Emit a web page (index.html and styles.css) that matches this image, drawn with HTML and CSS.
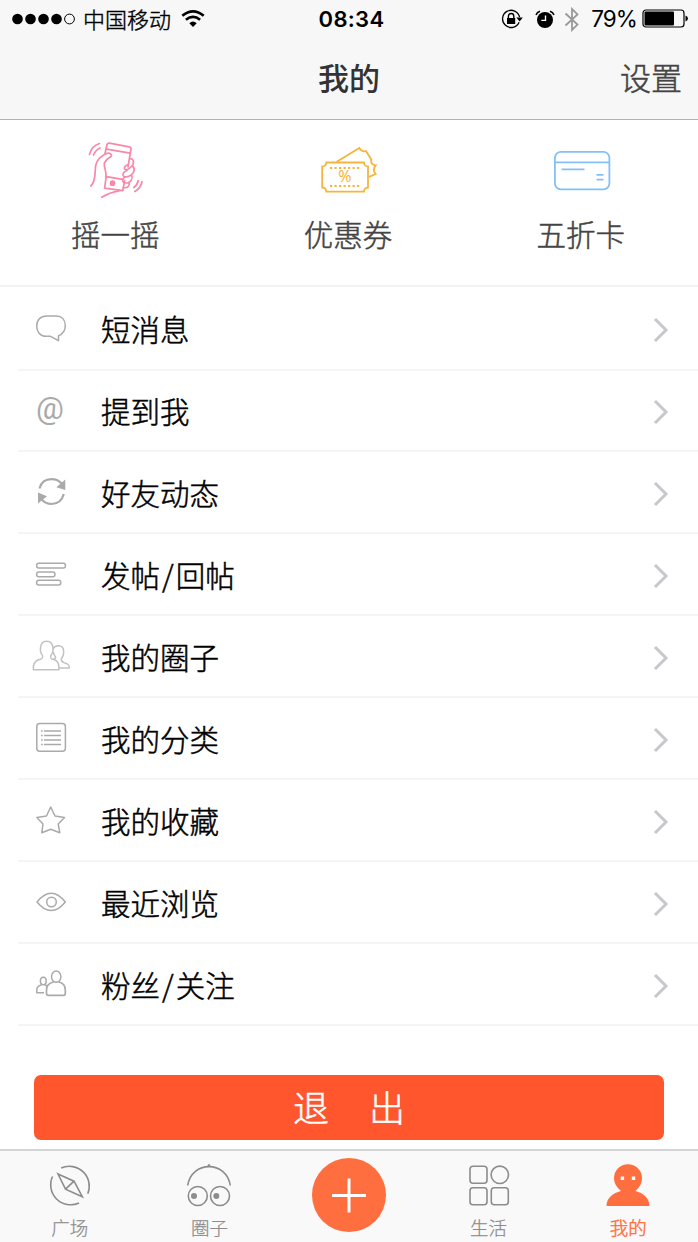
FILE: index.html
```html
<!DOCTYPE html>
<html lang="zh-CN">
<head>
<meta charset="utf-8">
<title>我的</title>
<link rel="stylesheet" href="styles.css">
</head>
<body>
<svg class="defs" width="0" height="0">
  <symbol id="chevron" viewBox="0 0 16 26"><path d="M2 2 L13 13 L2 24" fill="none" stroke="#c7c7cc" stroke-width="3"/></symbol>
</svg>
<div class="app">
  <header class="header">
    <div class="status">
      <div class="status-left">
        <svg width="64" height="12" viewBox="0 0 64 12"><g fill="#000"><circle cx="5.5" cy="6" r="5.3"/><circle cx="18.5" cy="6" r="5.3"/><circle cx="31.5" cy="6" r="5.3"/><circle cx="44.5" cy="6" r="5.3"/></g><circle cx="57.5" cy="6" r="4.9" fill="none" stroke="#000" stroke-width="1"/></svg>
        <span class="carrier">中国移动</span>
        <svg class="wifi" width="24" height="18" viewBox="0 0 24 18"><path d="M1.3 5.8 Q12 -2.9 22.7 5.8" fill="none" stroke="#000" stroke-width="2.7"/><path d="M4.9 9.7 Q12 4.1 19.1 9.7" fill="none" stroke="#000" stroke-width="2.7"/><path d="M8.3 13.2 Q12 10 15.7 13.2 L12 17Z"/></svg>
      </div>
      <span class="time">08:34</span>
      <div class="status-right">
        <svg width="22" height="20" viewBox="0 0 22 20"><path d="M18.1 13.2 A8.6 8.6 0 1 1 18.6 8.2" fill="none" stroke="#000" stroke-width="1.3"/><path d="M15.3 8.4 H21.8 L18.6 12.5Z"/><rect x="6" y="9" width="8.2" height="6"/><path d="M7.4 9.5 V7.2 a2.7 2.7 0 0 1 5.4 0 V9.5" fill="none" stroke="#000" stroke-width="1.4"/></svg>
        <svg class="alarm" width="20" height="19" viewBox="0 0 20 19"><circle cx="10" cy="10" r="8"/><path d="M1 5 Q2 2.2 5 1.2 M19 5 Q18 2.2 15 1.2" fill="none" stroke="#000" stroke-width="1.5"/><path d="M10.5 5.4 V10.4 H6.3" fill="none" stroke="#fff" stroke-width="1.4"/></svg>
        <svg class="bt" width="16" height="25" viewBox="0 0 16 25"><path d="M1.5 6.5 L13.5 17.6 L8 23 V2 L13.5 7.4 L1.5 18.5" fill="none" stroke="#999" stroke-width="1.8"/></svg>
        <span class="percent">79%</span>
        <svg class="battery" width="47" height="20" viewBox="0 0 47 20"><rect x="1" y="1" width="41" height="17" rx="3" fill="none" stroke="#000" stroke-width="1.2"/><rect x="2.5" y="2.5" width="29.5" height="14" rx="1"/><path d="M43.5 6.5 Q46 7.5 46 9.5 Q46 11.5 43.5 12.5Z"/></svg>
      </div>
    </div>
    <div class="nav"><span></span><h1 class="title">我的</h1><a class="settings">设置</a></div>
  </header>

  <section class="actions">
    <a class="action">
      <svg width="60" height="64" viewBox="0 0 60 64" fill="none" stroke="#f888aa" stroke-width="1.7" stroke-linecap="round" stroke-linejoin="round">
        <path d="M4.8 53 C10.5 48 8.5 38 9.8 32 C11 27 16 22.5 20.5 20.5 C24 19.5 26.5 21.5 25 23.5 C22 25 20 26.5 18.2 30.5 C18 35 20.5 38 20 43.5"/>
        <path d="M19 20.5 L21 11.5 Q21.5 10 23.5 10.2 L43.3 13.8 Q45.3 14.3 45 16 L42 34"/>
        <path d="M20.6 16.2 L44.2 20.2"/>
        <path d="M20.4 43.7 L36.4 46.3 M20.2 43.7 L18.6 55.2 L37 57.7 M38.6 47.5 L36.8 57.7"/>
        <path d="M44 25.5 C48 26 48.5 29.5 46 33 C43 36 40 37.5 38.5 36 C38 33.5 40.5 32.2 42 31.8 M46.5 33 C50 36 47.5 41 44.5 42.5 C41 44.5 37.5 44 37 42.5 C36.5 39.5 38.5 38.5 41 37.5 M45.5 42 C47.5 45.5 44.5 49 42 49.8 C38.5 50.5 36.5 49.5 36.7 47 C37 45.5 38 44.5 39 44 M43.5 49.5 C43.5 53.5 41 55.5 37.5 54.5"/>
        <path d="M33.7 57.7 C27 59 22 60.5 15.7 64.3"/>
        <circle cx="26.5" cy="50.2" r="2" fill="#f888aa"/>
        <path d="M3.5 21.5 Q5.5 13 13.5 10.5 M7.5 22 Q9.5 17 14 15 M47.8 54.5 Q51.5 52 52.2 47.5 M48.8 58.5 Q55 55 56 48.5"/>
      </svg><span>摇一摇</span>
    </a>
    <a class="action">
      <svg width="60" height="64" viewBox="0 0 60 64" fill="none" stroke="#f5b53c" stroke-width="1.8">
        <path d="M7.3 29.5 H45 A4 4 0 0 0 49 33.5 V54.5 A4 4 0 0 0 45 58.7 H7.3 A4 4 0 0 0 3.2 54.5 V33.5 A4 4 0 0 0 7.3 29.5Z"/>
        <path d="M17.7 28.7 L40.3 15 C42 17.8 44 19 47 18 L52.3 26.5 C51.5 29.5 53 32 56.7 32.3 C54 35.5 54 38 56.7 41 L50 43.8"/>
        <path d="M11 35 H41 M11 53 H41" stroke-dasharray="2.2 2.3"/>
        <text class="percent-sign" x="26" y="49" text-anchor="middle">%</text>
      </svg><span>优惠券</span>
    </a>
    <a class="action">
      <svg width="60" height="64" viewBox="0 0 60 64" fill="none" stroke="#83c0f7" stroke-width="1.8"><rect x="2.9" y="18.8" width="54.5" height="37.5" rx="6"/><path d="M3 29.3 H57.5 M9.5 36.3 H32.5 M44.5 41.8 H51.5 M44.5 46.7 H51.5"/></svg><span>五折卡</span>
    </a>
  </section>

  <main class="list">
    <a class="row"><svg class="icon" viewBox="0 -1 60 60"><path d="M26.5 17 H36 C42 17 45.3 21 45.3 26.5 C45.3 31.5 43 35 38.5 36.7 V41.7 L30.5 37.3 H26 C20 37.3 16.7 32.5 16.7 27 C16.7 21 20.5 17 26.5 17Z"/></svg><span class="label">短消息</span><svg class="chevron"><use href="#chevron"/></svg></a>
    <a class="row"><span class="icon at">@</span><span class="label">提到我</span><svg class="chevron"><use href="#chevron"/></svg></a>
    <a class="row"><svg class="icon" viewBox="0 0 60 60"><path stroke-width="2.2" d="M19.5 26.5 Q22 17.2 31.5 17.2 Q38 17.2 42 22 M43.8 32 Q41 42 31.5 42 Q25 42 21 36.7"/><path fill="#aaa" stroke="none" d="M45.3 17.5 V28 L36.3 25.2Z M18 41.5 V30.5 L27 34.2Z"/></svg><span class="label">好友动态</span><svg class="chevron"><use href="#chevron"/></svg></a>
    <a class="row"><svg class="icon" viewBox="0 0 60 60"><rect x="16.7" y="19.2" width="28.7" height="4.8" rx="2"/><rect x="16.7" y="28" width="18.2" height="4.8" rx="2"/><rect x="16.7" y="36.3" width="24" height="4.8" rx="2"/></svg><span class="label">发帖<i>/</i>回帖</span><svg class="chevron"><use href="#chevron"/></svg></a>
    <a class="row"><svg class="icon light" viewBox="0 0 60 60"><path d="M22.5 29.5 C19.5 26 19 15.2 26.7 15.2 C34.5 15.2 34 26 30.8 29.5 C30 33 32 33 35 34 C38.5 35.5 39.2 39 39 43.7 H13.3 C13 38 14.5 35 18.5 33.7 C21.5 33 23.2 32.5 22.5 29.5Z M33 23 C35 18.8 43.7 17.8 43.7 26 C43.7 30 42 32 41.3 33 C41 36 42.5 36 45 37 C48.5 38 49.5 39 49.3 42 H39 M33.5 32.5 C35.5 33 36 32 35.5 31 C34 29 33.5 27.5 33.3 26"/></svg><span class="label">我的圈子</span><svg class="chevron"><use href="#chevron"/></svg></a>
    <a class="row"><svg class="icon" viewBox="0 0 60 60"><rect x="16.8" y="15.5" width="28.6" height="27.8" rx="3"/><path d="M24 23 H41 M24 27.5 H41 M24 32 H41 M24 36.5 H41 M21 23 H22.7 M21 27.5 H22.7 M21 32 H22.7 M21 36.5 H22.7"/></svg><span class="label">我的分类</span><svg class="chevron"><use href="#chevron"/></svg></a>
    <a class="row"><svg class="icon" viewBox="0 0 60 60"><path d="M30.7 17 L35 26 L44.5 27.5 L38.2 34 L39.8 42.7 L30.7 39.2 L21.8 42.7 L23 34 L16.8 27.5 L26.5 26Z"/></svg><span class="label">我的收藏</span><svg class="chevron"><use href="#chevron"/></svg></a>
    <a class="row"><svg class="icon" viewBox="0 0 60 60"><path d="M17 30 Q24 21.2 31.2 21.2 Q38.5 21.2 45.3 30 Q38.5 38.6 31.2 38.6 Q24 38.6 17 30Z"/><circle cx="31.5" cy="30" r="4.8"/></svg><span class="label">最近浏览</span><svg class="chevron"><use href="#chevron"/></svg></a>
    <a class="row"><svg class="icon" viewBox="0 0 60 60"><ellipse cx="36.2" cy="22.7" rx="4.7" ry="5.6"/><path stroke-width="1.7" d="M33.5 28 C28.5 29 26.5 31.5 26.5 36 V39.5 Q26.5 41.3 28.5 41.3 H43.4 Q45.3 41.3 45.3 39.5 V36 C45.3 31 43 29 39 28"/><ellipse cx="23.3" cy="27" rx="2.9" ry="3.8"/><path d="M21.5 31 C18 31.7 16.8 33 16.8 36 V38.7 H24 M25 31 L27 32"/></svg><span class="label">粉丝<i>/</i>关注</span><svg class="chevron"><use href="#chevron"/></svg></a>
  </main>

  <div class="footer-action"><button class="logout"><span>退</span><span>出</span></button></div>

  <nav class="tabs">
    <a class="tab"><svg width="46" height="46" viewBox="0 0 46 46"><path d="M14.2 4 A20 20 0 0 1 40.8 29.8 M32 39 A20 20 0 0 1 5.5 12.5 M11 10 L27 17.2 L35.3 32.7 L18.5 25.2Z M18.5 25.2 L27 17.2"/></svg><span>广场</span></a>
    <a class="tab"><svg width="46" height="46" viewBox="0 0 46 46"><path d="M1.7 21.5 C5.5 -3.7 40.5 -3.7 44.3 21.5"/><circle cx="23" cy="1.6" r="1" fill="#8c8c8c" stroke-width="1"/><circle cx="11.8" cy="32" r="9.5"/><circle cx="34" cy="32" r="9.5"/><g fill="#8c8c8c" stroke="none"><circle cx="8" cy="32" r="3"/><circle cx="30.3" cy="32" r="3"/></g></svg><span>圈子</span></a>
    <a class="plus"><svg width="74" height="74" viewBox="0 0 74 74"><circle cx="37" cy="37" r="37" fill="#ff6e3f"/><path d="M20 37.5 H54 M37 20.5 V54.5" stroke="#fff" stroke-width="3"/></svg></a>
    <a class="tab"><svg width="46" height="46" viewBox="0 0 46 46"><rect x="4" y="2.3" width="17" height="17" rx="3"/><circle cx="33.8" cy="10.8" r="8.7"/><rect x="4" y="23.7" width="17" height="17" rx="3"/><rect x="25.3" y="23.7" width="17" height="17" rx="3"/></svg><span>生活</span></a>
    <a class="tab active"><svg width="46" height="46" viewBox="0 0 46 46"><g fill="#ff6e3f" stroke="none"><path d="M16 27 Q9 21.5 9 14 A14 13.8 0 0 1 37 14 Q37 21.5 30.5 27 C38 29 44.5 34 44.5 42 H1.5 C1.5 34 8 29 16 27Z"/><rect x="15.7" y="12.5" width="3.4" height="3.5" fill="#fff"/><rect x="26.8" y="12.5" width="3.4" height="3.5" fill="#fff"/></g></svg><span>我的</span></a>
  </nav>
</div>
</body>
</html>
```
FILE: styles.css
```css
* { box-sizing: border-box; }
body {
  margin: 0;
  background: #fff;
  font-family: "Noto Sans CJK SC", "Noto Sans", sans-serif;
}
svg { display: block; flex: none; }
.defs { display: none; }
.app {
  width: 698px;
  height: 1242px;
  display: flex;
  flex-direction: column;
  overflow: hidden;
}
.header {
  height: 120px;
  flex: none;
  background: #f7f7f7;
  border-bottom: 1px solid #b2b2b2;
}
.status {
  height: 38px;
  padding: 0 9px 0 12px;
  display: grid;
  grid-template-columns: 1fr auto 1fr;
  align-items: center;
  color: #000;
}
.status-left, .status-right { display: flex; align-items: center; }
.status-right { justify-content: flex-end; }
.carrier { margin: -3px 0 0 7px; font-size: 22px; font-weight: 300; line-height: 38px; -webkit-text-stroke: 0.4px; }
.wifi { margin-left: 10px; }
.time { padding-left: 2px; font: 600 22px/38px Inter, sans-serif; letter-spacing: 0.3px; }
.alarm { margin-left: 12px; }
.bt { margin-left: 9px; }
.percent { margin-left: 11px; font: 400 22.5px/38px Inter, sans-serif; letter-spacing: -0.9px; }
.battery { margin-left: 5px; }
.nav {
  height: 81px;
  padding: 0 16px;
  display: grid;
  grid-template-columns: 1fr auto 1fr;
  align-items: center;
}
.title { margin: -4px 0 0; font-size: 31px; line-height: 77px; font-weight: 500; color: #333; }
.settings { justify-self: end; margin-top: -4px; font-size: 31px; font-weight: 300; line-height: 77px; color: #444; -webkit-text-stroke: 0.5px; }
.actions {
  height: 167px;
  flex: none;
  display: grid;
  grid-template-columns: repeat(3, 1fr);
  border-bottom: 2px solid #f2f2f2;
}
.action {
  display: flex;
  flex-direction: column;
  align-items: center;
  padding-top: 13px;
  font-size: 29.5px;
  font-weight: 300;
  line-height: 44px;
  color: #444;
  -webkit-text-stroke: 0.5px;
}
.action svg { overflow: visible; }
.action span { margin: 14px 2px 0 0; }
.percent-sign { font: 400 16px "Noto Sans", sans-serif; fill: #f5b53c; stroke: none; -webkit-text-stroke: 0; }
.list {
  height: 738.5px;
  flex: none;
  display: grid;
  grid-template-rows: 83.5px repeat(8, 1fr);
  padding-left: 18px;
}
.row {
  display: flex;
  align-items: center;
  border-bottom: 2px solid #f5f5f5;
  padding: 0 29px 0 2px;
}
.icon { width: 60px; height: 60px; flex: none; fill: none; stroke: #aaa; stroke-width: 1.5; stroke-linejoin: round; }
.icon.light { stroke: #c2c2c2; }
.icon.at { font: 400 31px/57px Roboto, sans-serif; color: #aaa; text-align: center; }
.label { flex: 1; padding-left: 21px; font-size: 29.5px; font-weight: 300; line-height: 44px; color: #000; -webkit-text-stroke: 0.5px; }
.label i { font-style: normal; padding: 0 2px; }
.chevron { width: 16px; height: 26px; margin-top: 4px; }
.footer-action { padding: 49.5px 34px 8.5px; flex: none; }
.logout {
  width: 100%;
  height: 65px;
  display: flex;
  justify-content: center;
  align-items: center;
  gap: 40px;
  border: 0;
  border-radius: 7px;
  background: #ff562e;
  color: #fff;
  font: 300 36px/60px "Noto Sans CJK SC", sans-serif;
  padding-bottom: 5px;
  -webkit-text-stroke: 0.5px;
}
.tabs {
  flex: 1;
  display: grid;
  grid-template-columns: repeat(5, 1fr);
  background: #f9f9f9;
  border-top: 2px solid #d4d4d4;
}
.tab {
  display: flex;
  flex-direction: column;
  align-items: center;
  padding-top: 13px;
  font-size: 18.5px;
  font-weight: 300;
  line-height: 28px;
  color: #8c8c8c;
  -webkit-text-stroke: 0.25px;
}
.tab svg { fill: none; stroke: #8c8c8c; stroke-width: 1.6; }
.tab span { margin-top: 3px; }
.tab.active { color: #ff6e3f; -webkit-text-stroke: 0.45px; }
.plus { display: flex; justify-content: center; padding-top: 7px; }
```
